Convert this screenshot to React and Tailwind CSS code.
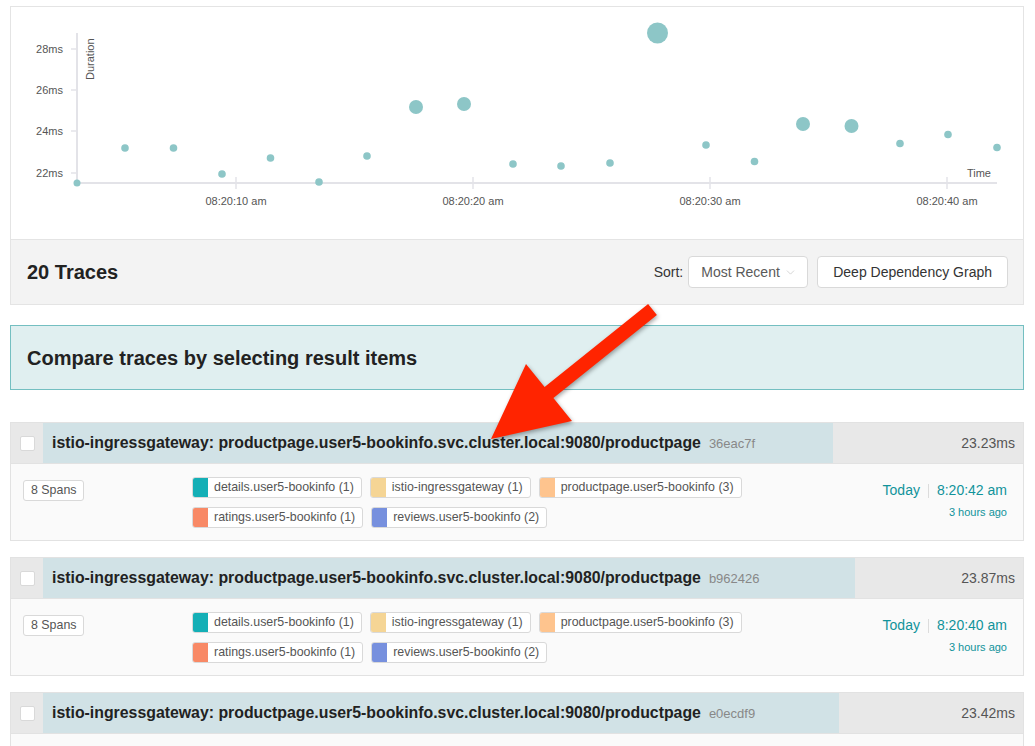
import { ChevronDown } from "lucide-react";

const dots = [
  [77, 183, 3.5], [125, 148, 3.8], [173.5, 148, 3.8], [222, 174, 3.8], [270.5, 158, 3.8],
  [319, 182, 3.8], [367, 156, 3.8], [416, 107, 7], [464, 104, 7], [513, 164, 3.8],
  [561, 166, 3.8], [610, 163, 3.8], [657.5, 33, 10.5], [706, 145, 3.8], [754.5, 161.5, 3.8],
  [803, 124, 7], [851.5, 126, 7], [900, 143.5, 3.8], [948, 134.5, 3.8], [997, 147.5, 3.8],
];

const yTicks = [
  { y: 49, label: "28ms" },
  { y: 90, label: "26ms" },
  { y: 131, label: "24ms" },
  { y: 173, label: "22ms" },
];

const xTicks = [
  { x: 236, label: "08:20:10 am" },
  { x: 473, label: "08:20:20 am" },
  { x: 710, label: "08:20:30 am" },
  { x: 947, label: "08:20:40 am" },
];

const services = [
  { name: "details.user5-bookinfo (1)", color: "bg-[#14afb6]" },
  { name: "istio-ingressgateway (1)", color: "bg-[#f5d595]" },
  { name: "productpage.user5-bookinfo (3)", color: "bg-[#fec48e]" },
  { name: "ratings.user5-bookinfo (1)", color: "bg-[#f88966]" },
  { name: "reviews.user5-bookinfo (2)", color: "bg-[#7790de]" },
];

const traces = [
  { id: "36eac7f", duration: 23.23, time: "8:20:42 am" },
  { id: "b962426", duration: 23.87, time: "8:20:40 am" },
  { id: "e0ecdf9", duration: 23.42, time: "8:20:38 am" },
];

const MAX_DURATION = 28.82;

const Chart = () => (
  <svg width="1012" height="232" viewBox="11 7 1012 232" className="block">
    {/* axes */}
    <line x1="77" y1="33" x2="77" y2="183" stroke="#e3e3e8" strokeWidth="2" />
    <line x1="76" y1="183" x2="997" y2="183" stroke="#e3e3e8" strokeWidth="2" />
    {yTicks.map((t) => (
      <g key={t.label}>
        <line x1="71" y1={t.y} x2="77" y2={t.y} stroke="#e3e3e8" strokeWidth="1.5" />
        <text x="63" y={t.y + 4} textAnchor="end" fontSize="11" fill="#555">
          {t.label}
        </text>
      </g>
    ))}
    {xTicks.map((t) => (
      <g key={t.label}>
        <line x1={t.x} y1="177" x2={t.x} y2="189" stroke="#e3e3e8" strokeWidth="1.5" />
        <text x={t.x} y="205" textAnchor="middle" fontSize="11" fill="#555">
          {t.label}
        </text>
      </g>
    ))}
    <text transform="translate(93.5 80) rotate(-90)" fontSize="11" fill="#555">
      Duration
    </text>
    <text x="991" y="177" textAnchor="end" fontSize="11" fill="#555">
      Time
    </text>
    {dots.map(([cx, cy, r], i) => (
      <circle key={i} cx={cx} cy={cy} r={r} fill="#8dc6c7" />
    ))}
  </svg>
);

const ServiceTag = ({ name, color }) => (
  <div className="flex h-[21px] items-stretch rounded-[3px] border border-[#d9d9d9] bg-white">
    <span className={`w-[15px] rounded-l-[2px] ${color}`} />
    <span className="flex items-center pl-[6px] pr-[7px] text-[12.4px] text-[#555]">
      {name}
    </span>
  </div>
);

const TraceItem = ({ trace }) => (
  <div className="border border-[#e2e2e2]">
    {/* Header */}
    <div className="flex h-[40px]">
      <div className="flex w-[32px] items-center justify-center bg-[#e8e8e8]">
        <div className="h-[15px] w-[15px] rounded-[2px] border border-[#d9d9d9] bg-white" />
      </div>
      <div className="relative flex flex-1 items-center justify-between bg-[#e8e8e8]">
        <div
          className="absolute inset-y-0 left-0 bg-[#d1e2e6]"
          style={{ width: `${(trace.duration / MAX_DURATION) * 100}%` }}
        />
        <div className="relative flex items-baseline gap-[8px] whitespace-nowrap pl-[9px]">
          <span className="text-[15.85px] font-bold text-[#222]">
            istio-ingressgateway: productpage.user5-bookinfo.svc.cluster.local:9080/productpage
          </span>
          <span className="text-[13px] text-[#888]">{trace.id}</span>
        </div>
        <span className="relative pr-[8px] text-[14px] text-[#555]">
          {trace.duration}ms
        </span>
      </div>
    </div>

    {/* Body */}
    <div className="flex border-t border-[#e2e2e2] bg-[#fafafa] pl-[12px] pr-[16px] pt-[13px] pb-[12px]">
      <div className="w-[169px]">
        <span className="inline-flex h-[21px] items-center rounded-[3px] border border-[#d9d9d9] bg-white px-[7px] text-[12.4px] text-[#555]">
          8 Spans
        </span>
      </div>
      <div className="flex w-[600px] flex-wrap content-start gap-x-[8px] gap-y-[9px]">
        {services.map((s) => (
          <ServiceTag key={s.name} {...s} />
        ))}
      </div>
      <div className="ml-auto flex flex-col items-end pt-[3px] text-[#11939a]">
        <div className="flex items-center text-[14px]">
          <span>Today</span>
          <span className="mx-[8px] h-[14px] w-px bg-[#dcdcdc]" />
          <span>{trace.time}</span>
        </div>
        <span className="mt-[3px] text-[11px]">3 hours ago</span>
      </div>
    </div>
  </div>
);

const App = () => {
  return (
    <div className="relative h-[746px] w-[1035px] overflow-hidden bg-white pl-[10px] pr-[11px] pt-[6px] font-['Liberation_Sans',Arial,sans-serif]">
      {/* Chart + summary */}
      <div className="border border-[#e4e4e4]">
        <Chart />
        <div className="flex h-[65px] items-center justify-between border-t border-[#e4e4e4] bg-[#f3f3f3] pl-[16px] pr-[15px]">
          <h1 className="text-[20px] font-bold text-[#222]">20 Traces</h1>
          <div className="flex items-center">
            <span className="mr-[5px] text-[14px] text-[#333]">Sort:</span>
            <div className="flex h-[32px] w-[120px] items-center justify-between rounded-[4px] border border-[#d9d9d9] bg-white pl-[12px] pr-[10px] text-[14px] text-[#595959]">
              <span>Most Recent</span>
              <ChevronDown size={13} strokeWidth={1.2} color="#bfbfbf" />
            </div>
            <button className="ml-[9px] h-[32px] rounded-[4px] border border-[#d9d9d9] bg-white px-[15px] text-[14px] text-[#333]">
              Deep Dependency Graph
            </button>
          </div>
        </div>
      </div>

      {/* Compare banner */}
      <div className="mt-[20px] flex h-[65px] items-center border border-[#74bfc1] bg-[#e0eff0] pl-[16px]">
        <h2 className="text-[20px] font-bold text-[#222]">
          Compare traces by selecting result items
        </h2>
      </div>

      {/* Trace list */}
      <div className="mt-[32px] flex flex-col gap-[16px]">
        {traces.map((t) => (
          <TraceItem key={t.id} trace={t} />
        ))}
      </div>

      {/* Annotation arrow */}
      <svg
        className="pointer-events-none absolute left-0 top-0 drop-shadow-[1px_2px_2px_rgba(0,0,0,0.35)]"
        width="1035"
        height="746"
      >
        <polygon
          points="648.1,304.1 656.9,314.9 553.4,397.9 572,421 491,439 526,364 544.6,387.1"
          fill="#ff2400"
        />
      </svg>
    </div>
  );
};

export default App;
